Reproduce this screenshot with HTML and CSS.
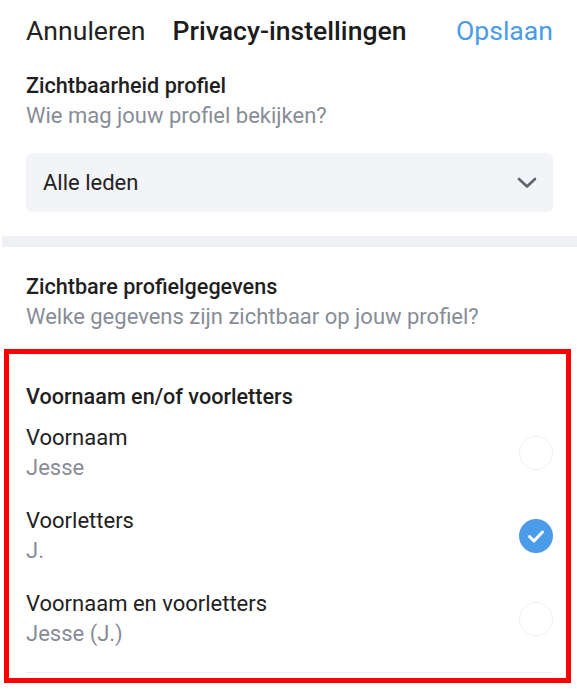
FILE: index.html
```html
<!DOCTYPE html>
<html lang="nl">
<head>
<meta charset="utf-8">
<title>Privacy-instellingen</title>
<link rel="stylesheet" href="styles.css">
</head>
<body>
<div class="page">
  <header class="topbar">
    <span class="cancel">Annuleren</span>
    <span class="title">Privacy-instellingen</span>
    <span class="save">Opslaan</span>
  </header>

  <section class="block">
    <div class="block-title">Zichtbaarheid profiel</div>
    <div class="block-sub">Wie mag jouw profiel bekijken?</div>
    <div class="select">
      <span class="select-value">Alle leden</span>
      <svg class="chevron" width="20" height="12" viewBox="0 0 20 12"><path d="M2 2 L10 9.5 L18 2" fill="none" stroke="#5f656d" stroke-width="2.6" stroke-linecap="round" stroke-linejoin="round"/></svg>
    </div>
  </section>

  <div class="divider"></div>

  <section class="block block-2">
    <div class="block-title">Zichtbare profielgegevens</div>
    <div class="block-sub">Welke gegevens zijn zichtbaar op jouw profiel?</div>
  </section>

  <section class="highlight">
    <div class="list">
      <div class="group-title">Voornaam en/of voorletters</div>
      <div class="option">
        <div class="option-text">
          <div class="option-label">Voornaam</div>
          <div class="option-value">Jesse</div>
        </div>
        <span class="radio"></span>
      </div>
      <div class="option">
        <div class="option-text">
          <div class="option-label">Voorletters</div>
          <div class="option-value">J.</div>
        </div>
        <span class="radio radio-on">
          <svg width="34" height="34" viewBox="0 0 34 34"><path d="M10.5 17.5 L15 22 L23.5 13" fill="none" stroke="#ffffff" stroke-width="3" stroke-linecap="round" stroke-linejoin="round"/></svg>
        </span>
      </div>
      <div class="option">
        <div class="option-text">
          <div class="option-label">Voornaam en voorletters</div>
          <div class="option-value">Jesse (J.)</div>
        </div>
        <span class="radio"></span>
      </div>
    </div>
  </section>
</div>
</body>
</html>
```

FILE: styles.css
```css
html, body {
  margin: 0;
  padding: 0;
  background: #ffffff;
}

body {
  font-family: Roboto, "Noto Sans", "Liberation Sans", sans-serif;
  color: #212121;
  width: 577px;
  height: 689px;
  overflow: hidden;
}

.page {
  display: flex;
  flex-direction: column;
}

.topbar {
  display: flex;
  align-items: baseline;
  padding: 15px 24px 0 26px;
  font-size: 26.6px;
  line-height: 32px;
}

.cancel {
  color: #222222;
}

.title {
  margin-left: 27px;
  font-weight: 500;
  color: #1c1c1c;
}

.save {
  margin-left: auto;
  color: #4a9be8;
}

.block {
  display: flex;
  flex-direction: column;
  padding: 0 24px 0 26px;
  margin-top: 24px;
}

.block-title {
  font-size: 21.6px;
  line-height: 30px;
  font-weight: 500;
  color: #1f1f1f;
}

.block-sub {
  font-size: 22px;
  line-height: 30px;
  color: #878d96;
}

.select {
  margin-top: 22px;
  height: 59px;
  border-radius: 6px;
  background: #f3f4f7;
  display: flex;
  align-items: center;
  justify-content: space-between;
  padding: 0 16px 0 17px;
}

.select-value {
  font-size: 22px;
  color: #222222;
}

.chevron {
  display: block;
}

.divider {
  margin: 24px 0 0 2px;
  height: 11px;
  background: #eef0f3;
}

.block-2 {
  margin-top: 25px;
}

.highlight {
  margin: 17px 6px 0 4px;
  border: 5px solid #ff0000;
  height: 324px;
  box-sizing: content-box;
}

.list {
  margin: 0 13px 0 17px;
  border-top: 1px solid #f1f2f4;
  border-bottom: 1px solid #eceef1;
  padding-top: 27px;
  padding-bottom: 11px;
}

.group-title {
  font-size: 21.6px;
  line-height: 30px;
  font-weight: 500;
  color: #1f1f1f;
}

.option {
  display: flex;
  align-items: center;
  justify-content: space-between;
  padding: 11px 0 12px;
}

.option-label {
  font-size: 22px;
  line-height: 30px;
  color: #222222;
}

.option-value {
  font-size: 22px;
  line-height: 30px;
  color: #878d96;
}

.radio {
  width: 34px;
  height: 34px;
  border-radius: 50%;
  box-sizing: border-box;
  border: 1.5px solid #eef0f2;
  display: block;
}

.radio-on {
  border: none;
  background: #4a9be8;
}

.radio-on svg {
  display: block;
}
```
